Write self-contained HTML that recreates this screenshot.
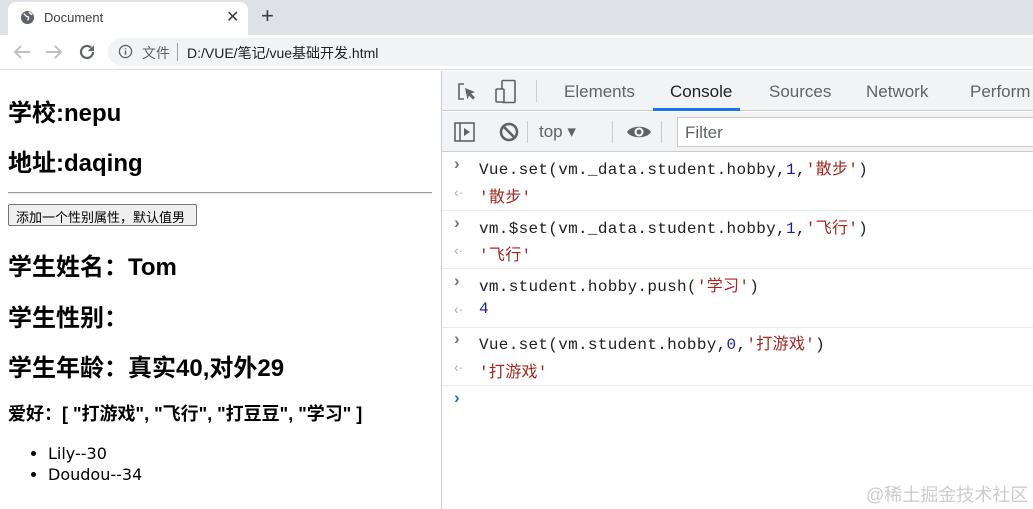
<!DOCTYPE html>
<html><head><meta charset="utf-8"><style>
*{box-sizing:border-box;margin:0;padding:0}
body{width:1033px;height:509px;overflow:hidden;background:#fff;font-family:"Liberation Sans","Noto Sans CJK SC",sans-serif;position:relative}
.abs{position:absolute}
.tabs{left:0;top:0;width:1033px;height:35px;background:#dee1e6}
.tab{left:8px;top:2px;width:240px;height:33px;background:#fff;border-radius:8px 8px 0 0}
.bar{left:0;top:35px;width:1033px;height:35px;background:#fff;border-bottom:1px solid #dadce0}
.omni{left:108px;top:38px;width:940px;height:28px;background:#f1f3f4;border-radius:14px}
.page{left:0;top:71px;width:441px;height:438px}
h2{position:absolute;left:8px;font-size:24px;font-weight:bold;white-space:nowrap}
.dev{left:441px;top:71px;width:592px;height:438px;border-left:1px solid #cbcdd1}
.mono{font-family:"Liberation Mono","Noto Sans CJK SC",monospace;font-size:16px;letter-spacing:0.3px;color:#202124;white-space:nowrap}
.s{color:#a3271f}.n{color:#1a1aa6}
.row{position:absolute;left:0;width:592px;border-bottom:1px solid #eaeaea}
.g{color:#777;position:absolute;left:12px;font-size:17px;font-weight:bold}
.r{color:#aaa;position:absolute;left:12px;font-size:14px}
</style></head><body>
<div class="abs tabs"></div>
<div class="abs tab"></div>
<svg class="abs" style="left:20px;top:10px" width="15" height="15" viewBox="0 0 16 16"><circle cx="8" cy="8" r="7" fill="#5f6368"/><path d="M4 4c2 1 2 3 4 3s1 3 0 4M10 2c0 2 2 2 3 3" stroke="#fff" stroke-width="1.6" fill="none"/></svg>
<div class="abs" style="left:44px;top:10px;font-size:13px;color:#3c4043">Document</div>
<div class="abs" style="left:226px;top:7px;font-size:16px;color:#3c4043">✕</div>
<div class="abs" style="left:261px;top:3px;font-size:22px;color:#3c4043">+</div>
<div class="abs bar"></div>
<svg class="abs" style="left:13px;top:44px" width="18" height="16" viewBox="0 0 18 16"><path d="M17 8H2M8 2L2 8l6 6" stroke="#bdc1c6" stroke-width="2" fill="none"/></svg>
<svg class="abs" style="left:45px;top:44px" width="18" height="16" viewBox="0 0 18 16"><path d="M1 8h15M10 2l6 6-6 6" stroke="#bdc1c6" stroke-width="2" fill="none"/></svg>
<svg class="abs" style="left:78px;top:43px" width="18" height="18" viewBox="0 0 18 18"><path d="M15 9a6 6 0 1 1-2-4.5" stroke="#5f6368" stroke-width="2.2" fill="none"/><path d="M16 2v6h-6z" fill="#5f6368"/></svg>
<div class="abs omni"></div>
<svg class="abs" style="left:118px;top:44px" width="15" height="15" viewBox="0 0 16 16"><circle cx="8" cy="8" r="6.5" stroke="#5f6368" stroke-width="1.4" fill="none"/><path d="M8 7v4.5M8 4.5v1.2" stroke="#5f6368" stroke-width="1.5"/></svg>
<div class="abs" style="left:142px;top:43px;font-size:14px;color:#5f6368">文件</div>
<div class="abs" style="left:177px;top:43px;width:1px;height:18px;background:#9aa0a6"></div>
<div class="abs" style="left:187px;top:43px;font-size:14px;color:#202124">D:/VUE/笔记/vue基础开发.html</div>

<div class="abs page">
<h2 style="top:22px">学校:nepu</h2>
<h2 style="top:72px">地址:daqing</h2>
<div class="abs" style="left:8px;top:121px;width:424px;height:2px;border-top:1px solid #9a9a9a;border-bottom:1px solid #eee"></div>
<div class="abs" style="left:8px;top:133px;width:189px;height:22px;border:1px solid #767676;border-radius:2px;background:#efefef;font-size:13px;padding:2px 0 0 7px;white-space:nowrap">添加一个性别属性，默认值男</div>
<h2 style="top:176px">学生姓名：Tom</h2>
<h2 style="top:227px">学生性别：</h2>
<h2 style="top:277px">学生年龄：真实40,对外29</h2>
<div class="abs" style="left:8px;top:329px;font-size:18px;font-weight:bold;white-space:nowrap">爱好：[ "打游戏", "飞行", "打豆豆", "学习" ]</div>
<ul class="abs" style="left:48px;top:372px;font-size:16px;line-height:21px;font-family:'DejaVu Sans',sans-serif">
<li>Lily--30</li><li>Doudou--34</li></ul>
</div>

<div class="abs dev">
<div class="abs" style="left:0;top:0;width:592px;height:40px;background:#f1f3f4;border-bottom:1px solid #cbcdd1"></div>
<svg class="abs" style="left:14px;top:10px" width="22" height="22" viewBox="0 0 22 22"><path d="M8 3H3v15h5" stroke="#5f6368" stroke-width="1.6" fill="none"/><path d="M9 7l10 4-4 1.5 4 4-2 2-4-4-1.5 4z" fill="#5f6368"/></svg>
<svg class="abs" style="left:52px;top:8px" width="24" height="26" viewBox="0 0 24 26"><rect x="8" y="1.5" width="13" height="22" rx="1" stroke="#5f6368" stroke-width="1.6" fill="none"/><rect x="2" y="10" width="8" height="13" rx="1" stroke="#5f6368" stroke-width="1.6" fill="#f1f3f4"/></svg>
<div class="abs" style="left:94px;top:9px;width:1px;height:22px;background:#ccc"></div>
<div class="abs" style="left:122px;top:11px;font-size:17px;color:#5f6368">Elements</div>
<div class="abs" style="left:228px;top:11px;font-size:17px;color:#202124">Console</div>
<div class="abs" style="left:211px;top:37px;width:87px;height:3px;background:#1a73e8"></div>
<div class="abs" style="left:327px;top:11px;font-size:17px;color:#5f6368">Sources</div>
<div class="abs" style="left:424px;top:11px;font-size:17px;color:#5f6368">Network</div>
<div class="abs" style="left:528px;top:11px;font-size:17px;color:#5f6368">Perform</div>
<div class="abs" style="left:0;top:41px;width:592px;height:40px;background:#f1f3f4;border-bottom:1px solid #cbcdd1"></div>
<svg class="abs" style="left:12px;top:50px" width="22" height="22" viewBox="0 0 22 22"><rect x="1" y="2" width="19" height="18" stroke="#5f6368" stroke-width="1.6" fill="none"/><path d="M6 2v18" stroke="#5f6368" stroke-width="1.6"/><path d="M10 7l6 4-6 4z" fill="#5f6368"/></svg>
<svg class="abs" style="left:57px;top:51px" width="20" height="20" viewBox="0 0 20 20"><circle cx="10" cy="10" r="8" stroke="#5f6368" stroke-width="2.6" fill="none"/><path d="M4.5 4.5l11 11" stroke="#5f6368" stroke-width="2.6"/></svg>
<div class="abs" style="left:85px;top:50px;width:1px;height:22px;background:#ccc"></div>
<div class="abs" style="left:97px;top:51px;font-size:17px;color:#5f6368">top ▾</div>
<div class="abs" style="left:170px;top:50px;width:1px;height:22px;background:#ccc"></div>
<svg class="abs" style="left:184px;top:52px" width="26" height="18" viewBox="0 0 26 18"><path d="M1 9C5 2 21 2 25 9 21 16 5 16 1 9z" fill="#5f6368"/><circle cx="13" cy="9" r="4.5" fill="#fff"/><circle cx="13" cy="9" r="2.5" fill="#5f6368"/></svg>
<div class="abs" style="left:219px;top:50px;width:1px;height:22px;background:#ccc"></div>
<div class="abs" style="left:235px;top:46px;width:360px;height:30px;background:#fff;border:1px solid #ccc"></div>
<div class="abs" style="left:243px;top:52px;font-size:17px;color:#5f6368">Filter</div>

<div class="row" style="top:81px;height:59px"></div>
<div class="row" style="top:140px;height:58px"></div>
<div class="row" style="top:198px;height:59px"></div>
<div class="row" style="top:257px;height:58px"></div>
<div class="g" style="top:83px">›</div><div class="abs mono" style="left:37px;top:84px">Vue.set(vm._data.student.hobby,<span class="n">1</span>,<span class="s">'散步'</span>)</div>
<div class="r" style="top:113px">‹·</div><div class="abs mono s" style="left:37px;top:112px">'散步'</div>
<div class="g" style="top:142px">›</div><div class="abs mono" style="left:37px;top:143px">vm.$set(vm._data.student.hobby,<span class="n">1</span>,<span class="s">'飞行'</span>)</div>
<div class="r" style="top:171px">‹·</div><div class="abs mono s" style="left:37px;top:170px">'飞行'</div>
<div class="g" style="top:200px">›</div><div class="abs mono" style="left:37px;top:201px">vm.student.hobby.push(<span class="s">'学习'</span>)</div>
<div class="r" style="top:230px">‹·</div><div class="abs mono n" style="left:37px;top:229px">4</div>
<div class="g" style="top:258px">›</div><div class="abs mono" style="left:37px;top:259px">Vue.set(vm.student.hobby,<span class="n">0</span>,<span class="s">'打游戏'</span>)</div>
<div class="r" style="top:288px">‹·</div><div class="abs mono s" style="left:37px;top:287px">'打游戏'</div>
<div class="g" style="top:317px;color:#1a73e8">›</div>
<div class="abs" style="left:424px;top:410px;font-size:18px;color:#ccc;white-space:nowrap">@稀土掘金技术社区</div>
</div>
</body></html>
